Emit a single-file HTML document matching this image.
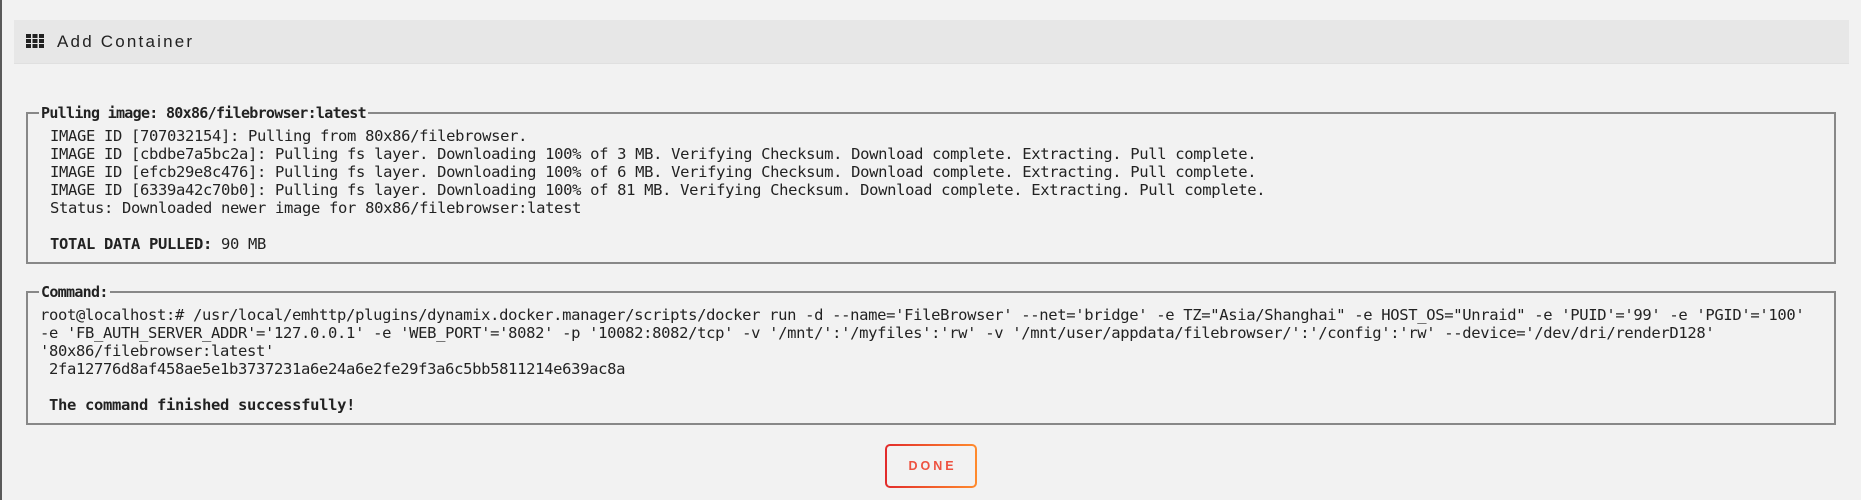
<!DOCTYPE html>
<html><head><style>
*{margin:0;padding:0;box-sizing:border-box}
html,body{width:1861px;height:500px;overflow:hidden;background:#f2f2f2}
body{position:relative;font-family:"DejaVu Sans Mono","Liberation Mono",monospace;color:#222}
.lb{position:absolute;left:0;top:0;width:2px;height:500px;background:#5a5a5a}
.hdr{position:absolute;left:14px;top:20px;width:1835px;height:44px;background:#e7e7e7;border-bottom:1px solid #e0e0e0}
.hdr .t{position:absolute;left:43px;top:12px;font-family:"Liberation Sans",sans-serif;font-size:17px;letter-spacing:2.2px;color:#222}
.ic{position:absolute;left:12px;top:14px;width:18px;height:14px}
.box{position:absolute;left:26px;width:1810px;border:2px solid #888}
.leg{position:absolute;left:11px;top:-11px;background:#f2f2f2;padding:0 2px;font-size:15px;font-weight:bold;letter-spacing:-0.7px;line-height:20px}
.txt{position:absolute;white-space:pre;font-size:15.5px;letter-spacing:-0.33px;line-height:18px}
.btn{position:absolute;left:885px;top:444px;width:92px;height:44px;border-radius:5px;background:linear-gradient(90deg,#e22b2b,#ff8b2d);padding:2px}
.btn div{width:100%;height:100%;background:#f2f2f2;border-radius:3px;font-family:"Liberation Sans",sans-serif;font-weight:bold;font-size:12.5px;letter-spacing:3px;color:#ee5240;text-align:center;line-height:40px;padding-left:3px}
</style></head><body>
<div class="lb"></div>
<div class="hdr">
<svg class="ic" viewBox="0 0 18 14"><g fill="#222"><rect x="0" y="0" width="5" height="4"/><rect x="6.5" y="0" width="5" height="4"/><rect x="13" y="0" width="5" height="4"/><rect x="0" y="5" width="5" height="4"/><rect x="6.5" y="5" width="5" height="4"/><rect x="13" y="5" width="5" height="4"/><rect x="0" y="10" width="5" height="4"/><rect x="6.5" y="10" width="5" height="4"/><rect x="13" y="10" width="5" height="4"/></g></svg>
<div class="t">Add Container</div>
</div>
<div class="box" style="top:112px;height:152px">
<div class="leg">Pulling image: 80x86/filebrowser:latest</div>
</div>
<div class="txt" style="left:50px;top:127px">IMAGE ID [707032154]: Pulling from 80x86/filebrowser.
IMAGE ID [cbdbe7a5bc2a]: Pulling fs layer. Downloading 100% of 3 MB. Verifying Checksum. Download complete. Extracting. Pull complete.
IMAGE ID [efcb29e8c476]: Pulling fs layer. Downloading 100% of 6 MB. Verifying Checksum. Download complete. Extracting. Pull complete.
IMAGE ID [6339a42c70b0]: Pulling fs layer. Downloading 100% of 81 MB. Verifying Checksum. Download complete. Extracting. Pull complete.
Status: Downloaded newer image for 80x86/filebrowser:latest

<b>TOTAL DATA PULLED:</b> 90 MB</div>
<div class="box" style="top:291px;height:134px">
<div class="leg">Command:</div>
</div>
<div class="txt" style="left:40px;top:306px">root@localhost:# /usr/local/emhttp/plugins/dynamix.docker.manager/scripts/docker run -d --name='FileBrowser' --net='bridge' -e TZ="Asia/Shanghai" -e HOST_OS="Unraid" -e 'PUID'='99' -e 'PGID'='100'
-e 'FB_AUTH_SERVER_ADDR'='127.0.0.1' -e 'WEB_PORT'='8082' -p '10082:8082/tcp' -v '/mnt/':'/myfiles':'rw' -v '/mnt/user/appdata/filebrowser/':'/config':'rw' --device='/dev/dri/renderD128'
'80x86/filebrowser:latest'
 2fa12776d8af458ae5e1b3737231a6e24a6e2fe29f3a6c5bb5811214e639ac8a

 <b>The command finished successfully!</b></div>
<div class="btn"><div>DONE</div></div>
</body></html>
